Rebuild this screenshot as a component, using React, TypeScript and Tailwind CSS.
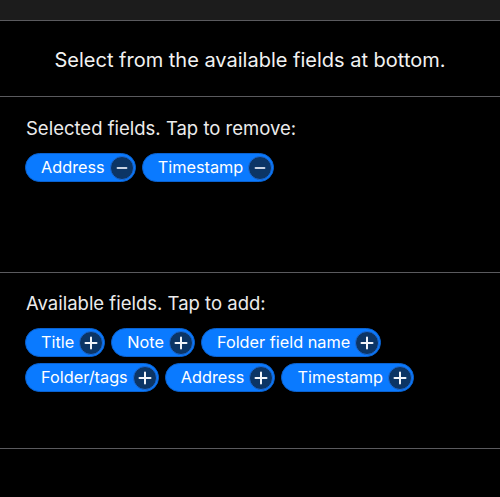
import React from "react"

const selected = ["Address", "Timestamp"]
const available = ["Title", "Note", "Folder field name", "Folder/tags", "Address", "Timestamp"]

function Chip({ label, kind }: { label: string; kind: "add" | "remove" }) {
    return (
        <div className="flex h-[29px] items-center rounded-full border border-[#0a62d0] bg-[#0a7aff] pl-[15px] pr-[1px] text-[16.3px] text-white">
            <span className="mr-[5px] leading-none">{label}</span>
            <span className="flex h-[24px] w-[24px] items-center justify-center rounded-full border border-[#1a6ad8] bg-[#0c3565]">
                {kind === "add" ? (
                    <svg width="14" height="14" viewBox="0 0 14 14">
                        <path d="M7 1.5v11M1.5 7h11" stroke="#f2f5fa" strokeWidth="2" strokeLinecap="round" />
                    </svg>
                ) : (
                    <svg width="12" height="12" viewBox="0 0 12 12">
                        <path d="M1.5 6h9" stroke="#c9d3e2" strokeWidth="1.8" strokeLinecap="round" />
                    </svg>
                )}
            </span>
        </div>
    )
}

export default function App() {
    return (
        <div className="h-[497px] w-[500px] bg-black text-white" style={{ fontFamily: "Inter, 'Noto Sans', sans-serif" }}>
            {/* top bar */}
            <div className="h-[20px] bg-[#1c1c1c]" />
            <div className="border-t border-[#5a5a5e]" />

            <div className="flex h-[75px] items-center justify-center pt-[3px] text-[20px] text-[#f2f2f2]">
                Select from the available fields at bottom.
            </div>
            <div className="border-t border-[#5a5a5e]" />

            {/* selected */}
            <div className="h-[175px] px-[25px] pt-[20px]">
                <p className="pl-[1px] text-[18.5px] leading-[22px] text-[#ececec]">Selected fields. Tap to remove:</p>
                <div className="mt-[14px] flex flex-wrap gap-[6px]">
                    {selected.map((s) => (
                        <Chip key={s} label={s} kind="remove" />
                    ))}
                </div>
            </div>
            <div className="border-t border-[#5a5a5e]" />

            {/* available */}
            <div className="h-[175px] px-[25px] pt-[19px]">
                <p className="pl-[1px] text-[18.5px] leading-[22px] text-[#ececec]">Available fields. Tap to add:</p>
                <div className="mt-[14px] flex flex-wrap gap-[6px]">
                    {available.map((s) => (
                        <Chip key={s} label={s} kind="add" />
                    ))}
                </div>
            </div>
            <div className="border-t border-[#5a5a5e]" />
        </div>
    )
}
